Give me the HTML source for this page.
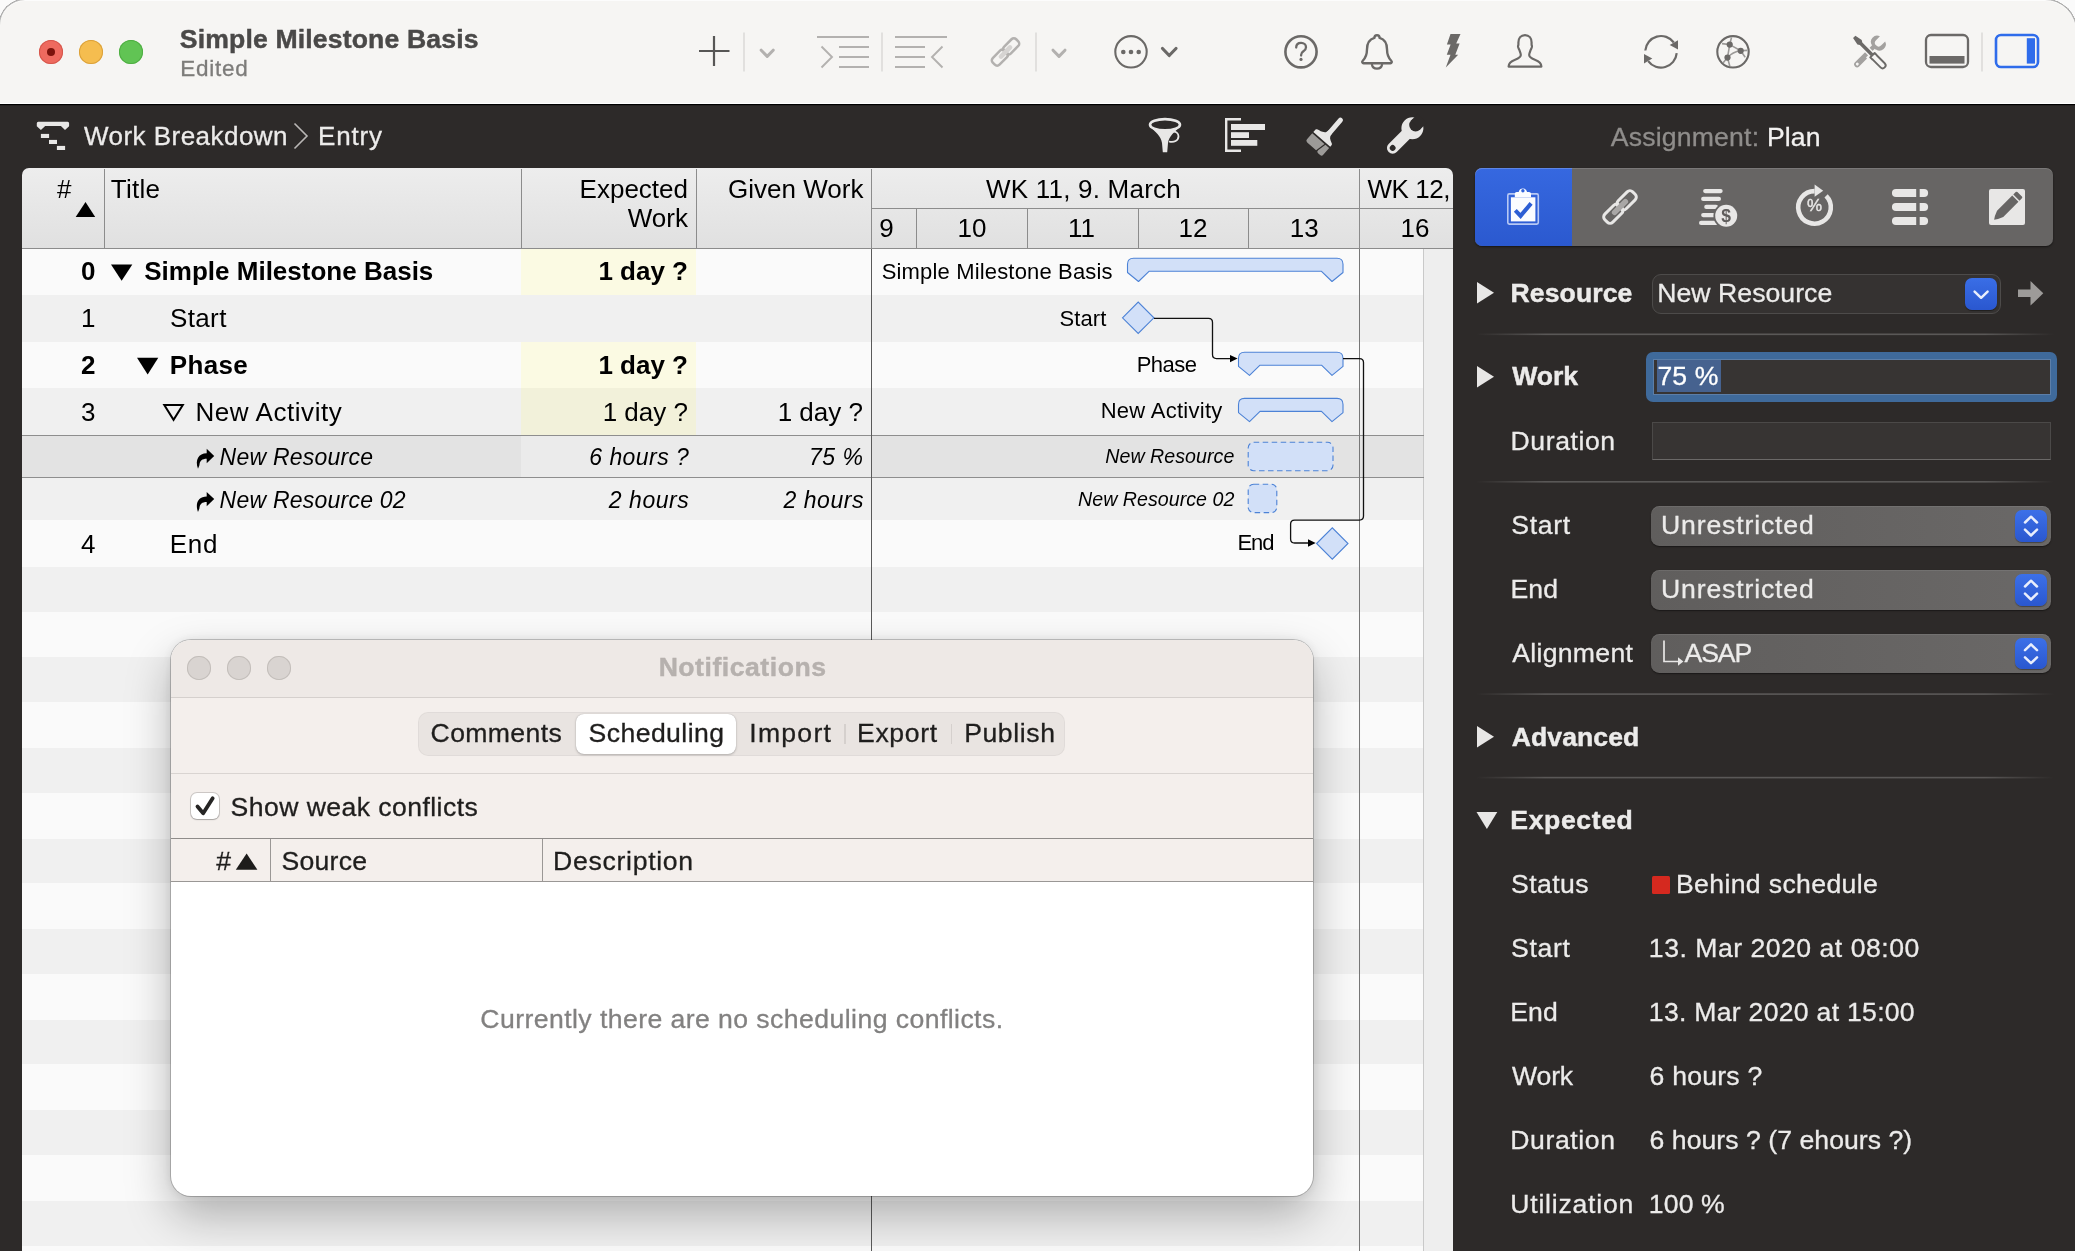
<!DOCTYPE html>
<html><head><meta charset="utf-8"><title>Simple Milestone Basis</title>
<style>
html,body{margin:0;padding:0;width:2075px;height:1251px;overflow:hidden;}
body{width:2075px;height:1251px;position:relative;overflow:hidden;background:#fafafa;font-family:"Liberation Sans", sans-serif;}
div{box-sizing:border-box;}
svg{position:absolute;left:0;top:0;overflow:visible;}
</style></head><body>
<!-- base -->
<div style="position:absolute;left:0;top:0;width:2075px;height:1251px;will-change:transform;overflow:hidden;">
<div style="position:absolute;left:-1.5px;top:-1.5px;width:2078px;height:1300px;background:#2d2a29;border-radius:26px 32px 26px 26px;"></div>
<div style="position:absolute;left:-1.5px;top:-1.5px;width:2078px;height:105.5px;background:#f6f5f3;border-radius:26px 32px 0 0;border:1.500px solid #bcbcbc;border-bottom:none;box-shadow:inset 0 1px 0 rgba(255,255,255,0.7);"></div>
<div style="position:absolute;left:0px;top:102.8px;width:2075px;height:1.2px;background:#ffffff;"></div>
<div style="position:absolute;left:0px;top:104px;width:2075px;height:1px;background:#000000;"></div>
<div style="position:absolute;left:0px;top:105px;width:2075px;height:1px;background:#242120;"></div>
<div style="position:absolute;left:22px;top:168px;width:1431px;height:81px;background:linear-gradient(#ededed,#e0e0e0);border-radius:7px 7px 0 0;"></div>
<div style="position:absolute;left:22px;top:249px;width:1402px;height:46px;background:#fafafa;"></div>
<div style="position:absolute;left:22px;top:295px;width:1402px;height:47px;background:#f0f0f0;"></div>
<div style="position:absolute;left:22px;top:342px;width:1402px;height:46px;background:#fafafa;"></div>
<div style="position:absolute;left:22px;top:388px;width:1402px;height:47px;background:#f0f0f0;"></div>
<div style="position:absolute;left:22px;top:435px;width:1402px;height:43px;background:#e3e3e3;"></div>
<div style="position:absolute;left:22px;top:478px;width:1402px;height:42px;background:#f0f0f0;"></div>
<div style="position:absolute;left:22px;top:520px;width:1402px;height:47px;background:#fafafa;"></div>
<div style="position:absolute;left:22px;top:567px;width:1402px;height:684px;background:#fafafa;"></div>
<div style="position:absolute;left:22px;top:566.8px;width:1402px;height:44.8px;background:#f0f0f0;"></div>
<div style="position:absolute;left:22px;top:657.37px;width:1402px;height:44.8px;background:#f0f0f0;"></div>
<div style="position:absolute;left:22px;top:747.94px;width:1402px;height:44.8px;background:#f0f0f0;"></div>
<div style="position:absolute;left:22px;top:838.51px;width:1402px;height:44.8px;background:#f0f0f0;"></div>
<div style="position:absolute;left:22px;top:929.08px;width:1402px;height:44.8px;background:#f0f0f0;"></div>
<div style="position:absolute;left:22px;top:1019.65px;width:1402px;height:44.8px;background:#f0f0f0;"></div>
<div style="position:absolute;left:22px;top:1110.22px;width:1402px;height:44.8px;background:#f0f0f0;"></div>
<div style="position:absolute;left:22px;top:1200.79px;width:1402px;height:44.8px;background:#f0f0f0;"></div>
<div style="position:absolute;left:1423.3px;top:249px;width:29.7px;height:1002px;background:#eeeeee;border-left:1.200px solid #c9c9c9;"></div>
<div style="position:absolute;left:22px;top:248px;width:1431px;height:1px;background:#8c8c8c;"></div>
<div style="position:absolute;left:1453px;top:168px;width:622px;height:1083px;background:#2d2a29;"></div>
<div style="position:absolute;left:39px;top:40px;width:24px;height:24px;background:#ee6a5f;border-radius:50%;box-shadow:inset 0 0 0 1px #d5574c;"></div>
<div style="position:absolute;left:47px;top:48px;width:8px;height:8px;background:#7c130c;border-radius:50%;"></div>
<div style="position:absolute;left:79px;top:40px;width:24px;height:24px;background:#f5bd4f;border-radius:50%;box-shadow:inset 0 0 0 1px #dba13a;"></div>
<div style="position:absolute;left:119px;top:40px;width:24px;height:24px;background:#61c454;border-radius:50%;box-shadow:inset 0 0 0 1px #4fae43;"></div>
<div style="position:absolute;white-space:pre;left:179.80px;top:26.00px;font-size:26.6px;line-height:26.6px;color:#4a4948;font-weight:700;letter-spacing:0.151px;-webkit-text-stroke:0.45px #4a4948;">Simple Milestone Basis</div>
<div style="position:absolute;white-space:pre;left:180.34px;top:57.55px;font-size:22.5px;line-height:22.5px;color:#7d7c7a;letter-spacing:0.703px;-webkit-text-stroke:0.3px #7d7c7a;">Edited</div>
<svg width="2075" height="110" viewBox="0 0 2075 110"><path d="M699 51H729.5M714 36V66" stroke="#575655" stroke-width="2.2" fill="none"/><path d="M744 32.5V71.5" stroke="#dddbd9" stroke-width="1.6"/><path d="M882 32.5V71.5" stroke="#dddbd9" stroke-width="1.6"/><path d="M1036 32.5V71.5" stroke="#dddbd9" stroke-width="1.6"/><path d="M1982 32.5V71.5" stroke="#dddbd9" stroke-width="1.6"/><path d="M761.2 50.2L767.2 56.4L773.2 50.2" stroke="#b3b1af" stroke-width="3" fill="none" stroke-linecap="round" stroke-linejoin="round"/><path d="M1053 50.2L1059 56.4L1065 50.2" stroke="#b3b1af" stroke-width="3" fill="none" stroke-linecap="round" stroke-linejoin="round"/><g stroke="#b3b1af" stroke-width="1.9" fill="none"><path d="M817 37H869M839 47H869M839 57H869M839 67H869"/><path d="M821.5 46.5L832 57L821.5 67.5" stroke-linejoin="miter"/></g><g stroke="#b3b1af" stroke-width="1.9" fill="none"><path d="M895 37H947M895 47H925M895 57H925M895 67H925"/><path d="M942.5 46.5L932 57L942.5 67.5"/></g><g transform="rotate(-45 1005.5 52)" fill="none" stroke="#b3b1af" stroke-width="2.5"><rect x="988.952" y="47.254" width="17.22" height="9.492" rx="3.276"/><rect x="1004.83" y="47.254" width="17.22" height="9.492" rx="3.276"/><path d="M999.116 52H1011.88" stroke="#d6d4d2" stroke-width="4.62" stroke-linecap="round"/></g><circle cx="1131" cy="51.8" r="15.7" stroke="#6b6967" stroke-width="2.1" fill="none"/><circle cx="1123.3" cy="52" r="2.3" fill="#6b6967"/><circle cx="1131" cy="52" r="2.3" fill="#6b6967"/><circle cx="1138.7" cy="52" r="2.3" fill="#6b6967"/><path d="M1162.5 48.5L1169.2 55.5L1176 48.5" stroke="#6b6967" stroke-width="3.2" fill="none" stroke-linecap="round" stroke-linejoin="round"/><circle cx="1301" cy="51.8" r="15.6" stroke="#6b6967" stroke-width="2.6" fill="none"/><path d="M1296.2 47.6c0-3 2-4.8 4.9-4.8c2.9 0 4.9 1.8 4.9 4.4c0 2-1 3-2.6 4.1c-1.600 1.1-2.300 1.900-2.300 3.700v0.600" stroke="#6b6967" stroke-width="2.3" fill="none" stroke-linecap="round"/><circle cx="1301" cy="59.4" r="1.6" fill="#6b6967"/><path d="M1377 35.3c1.500 0 2.600 1.100 2.600 2.600c4.800 1.400 7.400 5.400 7.400 11.400c0 6 1.400 8.800 4.400 11.700c0.800 0.800 0.300 2.200-0.900 2.200h-27c-1.200 0-1.700-1.400-0.900-2.200c3-2.900 4.400-5.700 4.400-11.700c0-6 2.600-10 7.400-11.400c0-1.500 1.100-2.600 2.600-2.600z" stroke="#6b6967" stroke-width="2.4" fill="none" stroke-linejoin="round"/><path d="M1371.800 64c0.400 2.700 2.500 4.700 5.200 4.700c2.700 0 4.800-2 5.200-4.700" stroke="#6b6967" stroke-width="2.200" fill="none"/><path d="M1450.500 34h10l-4.300 9.500h3.400l-4.300 11.300h2.900l-12.400 12.600l4.700-12.700h-3.700l3.800-10.200h-3.700z" fill="#6b6967"/><path d="M1525 35.200c4.200 0 6.600 3.200 6.600 7.400c0 1.300-0.200 2.300 0.300 3.200c0.500 1-0.700 2.800-1.100 3.900c-0.700 1.900-1.600 3.300-1.600 5.400c0 2.300 2.300 3.400 5.700 4.600c4.500 1.600 6.500 3.200 6.500 6.900h-32.800c0-3.700 2-5.300 6.500-6.900c3.400-1.200 5.700-2.300 5.700-4.600c0-2.100-0.900-3.500-1.600-5.400c-0.400-1.100-1.600-2.900-1.100-3.900c0.500-0.900 0.300-1.900 0.300-3.200c0-4.200 2.400-7.400 6.600-7.400z" stroke="#6b6967" stroke-width="2.200" fill="none" stroke-linejoin="round"/><g stroke="#6b6967" stroke-width="2.200" fill="none"><path d="M1645.300 50.500a15.800 15.800 0 0 1 28.500-8"/><path d="M1676.700 53.100a15.800 15.800 0 0 1-28.500 8"/></g><path d="M1678 40.200v9.300l-8.300-4.400z" fill="#6b6967"/><path d="M1644 63.400v-9.300l8.300 4.400z" fill="#6b6967"/><circle cx="1733" cy="51.800" r="15.700" stroke="#6b6967" stroke-width="2.100" fill="none"/><g stroke="#9b9997" stroke-width="1.600" fill="none"><path d="M1731.500 37.500l-1.800 7l-7.700-0.900M1729.700 44.600l11 6.200l6.500-0.400M1740.700 50.800l4.500 6.500M1740.700 50.800c-6 0.800-10 3.200-13.200 6.800M1729.700 44.600l-2.200 13l2.300 8.500M1727.500 57.600l-4.500 5.500"/></g><circle cx="1729.7" cy="44.6" r="3.1" fill="#6b6967"/><circle cx="1740.7" cy="50.8" r="3.1" fill="#6b6967"/><circle cx="1727.5" cy="57.6" r="3.1" fill="#6b6967"/><g transform="translate(1868.900 52.500) rotate(45)"><path d="M-2.900 -8.500V16.750a2.900 2.900 0 0 0 5.800 0V-8.500z" fill="#a3a19f"/><path d="M-3.700 -19.300A6.300 6.300 0 0 0 -2.900 -7.200H2.900A6.300 6.300 0 0 0 3.700 -19.300V-13.800A3.700 3.700 0 0 1 -3.700 -13.800z" fill="#a3a19f"/><circle cx="0" cy="16.400" r="1.450" fill="#f6f5f3"/></g><g transform="translate(1869.750 52.460) rotate(-45)"><path d="M-1.650 -21.950H1.650L3.050 -14.400L1.750 -12.300V3.200H-1.750V-12.300L-3.050 -14.400Z" fill="#f6f5f3" stroke="#f6f5f3" stroke-width="3" stroke-linejoin="round"/><path d="M-3.900 3.200H3.900V6.300L3 7.200V18.900a3 3 0 0 1-6 0V7.200L-3.900 6.300Z" fill="#f6f5f3" stroke="#f6f5f3" stroke-width="4.600"/><path d="M-1.650 -21.950H1.650L3.050 -14.400L1.750 -12.300V3.200H-1.750V-12.300L-3.050 -14.400Z" fill="#6b6967"/><path d="M-3.100 3.800H3.100V6.300L2.950 7.200V18.200a2.950 2.950 0 0 1-5.900 0V7.200L-3.100 6.300Z" fill="#f6f5f3" stroke="#6b6967" stroke-width="1.900" stroke-linejoin="round"/></g><rect x="1926" y="35" width="42" height="32" rx="5" stroke="#6b6967" stroke-width="2.300" fill="none"/><rect x="1929.500" y="56" width="35" height="7.600" fill="#6b6967"/><rect x="1996" y="35" width="42" height="32" rx="5" stroke="#2f6ceb" stroke-width="2.600" fill="none"/><rect x="2026.800" y="38.200" width="8.200" height="25.400" fill="#2f6ceb"/></svg>
<svg width="2075" height="170" viewBox="0 0 2075 170"><path d="M38.300 121.800H67.600Q69.100 121.800 69.100 123.300V126.300L65 130L60.900 126.100H45.200L40.900 130L36.800 126.300V123.300Q36.800 121.800 38.300 121.800Z" fill="#e8e7e6"/><rect x="40.900" y="133.900" width="8.200" height="4.100" fill="#e8e7e6"/><rect x="49" y="139.900" width="8" height="4.100" fill="#e8e7e6"/><rect x="56.900" y="145.900" width="8.200" height="4.100" fill="#e8e7e6"/><path d="M294.500 123.500L307 136L294.500 148.500" stroke="#b9b7b5" stroke-width="1.600" fill="none"/><ellipse cx="1165" cy="124.700" rx="15" ry="5.600" stroke="#e8e7e6" stroke-width="2.600" fill="none"/><path d="M1150.500 127c5 5 10.500 9 11.500 16l0.800 9.300h4.400l0.800-9.300c1-7 6.500-11 11.500-16c-8 4.500-21 4.500-29 0z" fill="#e8e7e6"/><path d="M1169 141.500c5 1.500 9.500-1 9.500-5.200c0-3.300-2.800-5-5.500-4.600" stroke="#e8e7e6" stroke-width="1.800" fill="none"/><path d="M1241 119.200H1226.200V150.800H1241" stroke="#e8e7e6" stroke-width="2.400" fill="none"/><rect x="1231" y="124" width="34" height="6" fill="#e8e7e6"/><rect x="1231" y="132.200" width="18" height="5.800" fill="#e8e7e6"/><rect x="1231" y="140" width="26.300" height="5.800" fill="#e8e7e6"/><g transform="translate(1321.300 139.350) rotate(41)"><rect x="-0.600" y="-29.500" width="5" height="22" rx="2.500" fill="#e8e7e6"/><path d="M-10.800 -0.300V-3.400C-10.800 -5.600 -7 -5.200 -4 -6.500C-1.500 -7.600 -0.600 -8.600 -0.600 -11.500H4.400C4.400 -8.600 5 -6.600 8 -5.100C10.500 -3.900 11.600 -3.600 11.600 -2.200V-0.300Z" fill="#e8e7e6"/><path d="M-10.800 1.400H5.400L3.200 11.600H-8.600Q-10.800 11.600 -10.800 9.400Z" fill="#9c9a98"/><path d="M6.700 1.400H11.600V10.400Q11.600 12.600 9.400 12.600H6.600Q4.400 12.600 4.800 10.400Z" fill="#9c9a98"/></g><g transform="translate(1412.400 128.200) rotate(45)"><path d="M-5.700 0H5.700V27.900a5.700 5.700 0 0 1-11.400 0Z" fill="#e8e7e6"/><circle cx="0" cy="0" r="11" fill="#e8e7e6"/><circle cx="0" cy="-4.500" r="6.400" fill="#2d2a29"/><rect x="-6.400" y="-14" width="12.800" height="9.500" fill="#2d2a29"/><circle cx="0" cy="27.900" r="2.900" fill="#2d2a29"/></g></svg>
<div style="position:absolute;white-space:pre;left:83.94px;top:123.40px;font-size:26px;line-height:26px;color:#eceBea;letter-spacing:0.468px;-webkit-text-stroke:0.3px #eceBea;">Work Breakdown</div>
<div style="position:absolute;white-space:pre;left:318.08px;top:123.40px;font-size:26px;line-height:26px;color:#ecebea;letter-spacing:0.819px;-webkit-text-stroke:0.3px #ecebea;">Entry</div>
<div style="position:absolute;white-space:pre;left:1610.73px;top:124.10px;font-size:26.6px;line-height:26.6px;color:#8f8d8b;letter-spacing:0.199px;-webkit-text-stroke:0.3px #8f8d8b;">Assignment:</div>
<div style="position:absolute;white-space:pre;left:1767.03px;top:124.10px;font-size:26.6px;line-height:26.6px;color:#f2f1f0;letter-spacing:0.101px;-webkit-text-stroke:0.3px #f2f1f0;">Plan</div>
<div style="position:absolute;left:103.5px;top:169px;width:1px;height:79px;background:#8c8c8c;"></div>
<div style="position:absolute;left:521px;top:169px;width:1px;height:79px;background:#8c8c8c;"></div>
<div style="position:absolute;left:696px;top:169px;width:1px;height:79px;background:#8c8c8c;"></div>
<div style="position:absolute;left:871px;top:169px;width:1px;height:79px;background:#8c8c8c;"></div>
<div style="position:absolute;left:871px;top:208px;width:582px;height:1px;background:#8c8c8c;"></div>
<div style="position:absolute;left:916px;top:209px;width:1px;height:39px;background:#8c8c8c;"></div>
<div style="position:absolute;left:1027px;top:209px;width:1px;height:39px;background:#8c8c8c;"></div>
<div style="position:absolute;left:1138px;top:209px;width:1px;height:39px;background:#8c8c8c;"></div>
<div style="position:absolute;left:1248px;top:209px;width:1px;height:39px;background:#8c8c8c;"></div>
<div style="position:absolute;left:1359px;top:169px;width:1px;height:79px;background:#8c8c8c;"></div>
<div style="position:absolute;white-space:pre;left:57.00px;top:175.60px;font-size:26px;line-height:26px;color:#000;">#</div>
<div style="position:absolute;white-space:pre;left:110.74px;top:175.60px;font-size:26px;line-height:26px;color:#000;letter-spacing:0.286px;">Title</div>
<div style="position:absolute;white-space:pre;left:579.59px;top:175.60px;font-size:26px;line-height:26px;color:#000;">Expected</div>
<div style="position:absolute;white-space:pre;left:627.80px;top:205.20px;font-size:26px;line-height:26px;color:#000;">Work</div>
<div style="position:absolute;white-space:pre;left:728.06px;top:175.60px;font-size:26px;line-height:26px;color:#000;">Given Work</div>
<div style="position:absolute;white-space:pre;left:986.04px;top:175.60px;font-size:26px;line-height:26px;color:#000;letter-spacing:0.214px;">WK 11, 9. March</div>
<div style="position:absolute;white-space:pre;left:1367.54px;top:175.60px;font-size:26px;line-height:26px;color:#000;letter-spacing:-0.480px;">WK 12,</div>
<div style="position:absolute;white-space:pre;left:879.20px;top:215.20px;font-size:26px;line-height:26px;color:#000;">9</div>
<div style="position:absolute;white-space:pre;left:957.54px;top:215.20px;font-size:26px;line-height:26px;color:#000;">10</div>
<div style="position:absolute;white-space:pre;left:1068.00px;top:215.20px;font-size:26px;line-height:26px;color:#000;">11</div>
<div style="position:absolute;white-space:pre;left:1178.54px;top:215.20px;font-size:26px;line-height:26px;color:#000;">12</div>
<div style="position:absolute;white-space:pre;left:1289.74px;top:215.20px;font-size:26px;line-height:26px;color:#000;">13</div>
<div style="position:absolute;white-space:pre;left:1400.54px;top:215.20px;font-size:26px;line-height:26px;color:#000;">16</div>
<div style="position:absolute;left:521px;top:249px;width:175px;height:46px;background:#fbfae3;"></div>
<div style="position:absolute;left:521px;top:342px;width:175px;height:46px;background:#fbfae3;"></div>
<div style="position:absolute;left:521px;top:388px;width:175px;height:47px;background:#f2f1da;"></div>
<div style="position:absolute;left:521px;top:435px;width:350.5px;height:43px;background:#ebebeb;"></div>
<div style="position:absolute;left:22px;top:434.5px;width:1402px;height:1px;background:#8e8e8e;"></div>
<div style="position:absolute;left:22px;top:477px;width:1402px;height:1px;background:#8e8e8e;"></div>
<div style="position:absolute;white-space:pre;left:80.93px;top:258.30px;font-size:26px;line-height:26px;color:#000;font-weight:700;">0</div>
<div style="position:absolute;white-space:pre;left:80.93px;top:305.10px;font-size:26px;line-height:26px;color:#000;">1</div>
<div style="position:absolute;white-space:pre;left:80.93px;top:352.00px;font-size:26px;line-height:26px;color:#000;font-weight:700;">2</div>
<div style="position:absolute;white-space:pre;left:80.93px;top:398.80px;font-size:26px;line-height:26px;color:#000;">3</div>
<div style="position:absolute;white-space:pre;left:80.93px;top:530.80px;font-size:26px;line-height:26px;color:#000;">4</div>
<div style="position:absolute;white-space:pre;left:144.23px;top:258.30px;font-size:26px;line-height:26px;color:#000;font-weight:700;letter-spacing:0.006px;">Simple Milestone Basis</div>
<div style="position:absolute;white-space:pre;left:169.93px;top:305.10px;font-size:26px;line-height:26px;color:#000;letter-spacing:0.385px;">Start</div>
<div style="position:absolute;white-space:pre;left:169.68px;top:352.00px;font-size:26px;line-height:26px;color:#000;font-weight:700;letter-spacing:0.389px;">Phase</div>
<div style="position:absolute;white-space:pre;left:195.48px;top:398.80px;font-size:26px;line-height:26px;color:#000;letter-spacing:0.564px;">New Activity</div>
<div style="position:absolute;white-space:pre;left:219.60px;top:445.60px;font-size:23px;line-height:23px;color:#000;font-style:italic;letter-spacing:0.234px;">New Resource</div>
<div style="position:absolute;white-space:pre;left:219.60px;top:488.70px;font-size:23px;line-height:23px;color:#000;font-style:italic;letter-spacing:0.229px;">New Resource 02</div>
<div style="position:absolute;white-space:pre;left:169.68px;top:530.80px;font-size:26px;line-height:26px;color:#000;letter-spacing:0.741px;">End</div>
<div style="position:absolute;white-space:pre;left:598.41px;top:258.30px;font-size:26px;line-height:26px;color:#000;font-weight:700;">1 day ?</div>
<div style="position:absolute;white-space:pre;left:598.41px;top:352.00px;font-size:26px;line-height:26px;color:#000;font-weight:700;">1 day ?</div>
<div style="position:absolute;white-space:pre;left:602.70px;top:398.80px;font-size:26px;line-height:26px;color:#000;">1 day ?</div>
<div style="position:absolute;white-space:pre;left:777.70px;top:398.80px;font-size:26px;line-height:26px;color:#000;">1 day ?</div>
<div style="position:absolute;white-space:pre;left:589.30px;top:445.60px;font-size:23px;line-height:23px;color:#000;font-style:italic;letter-spacing:0.449px;">6 hours ?</div>
<div style="position:absolute;white-space:pre;left:809.00px;top:445.60px;font-size:23px;line-height:23px;color:#000;font-style:italic;letter-spacing:0.521px;">75 %</div>
<div style="position:absolute;white-space:pre;left:608.80px;top:488.70px;font-size:23px;line-height:23px;color:#000;font-style:italic;letter-spacing:0.547px;">2 hours</div>
<div style="position:absolute;white-space:pre;left:783.50px;top:488.70px;font-size:23px;line-height:23px;color:#000;font-style:italic;letter-spacing:0.547px;">2 hours</div>
<div style="position:absolute;left:871px;top:249px;width:1px;height:1002px;background:#5a5a5a;"></div>
<div style="position:absolute;left:1359px;top:249px;width:1px;height:1002px;background:#777777;"></div>
<svg width="2075" height="1251" viewBox="0 0 2075 1251"><path d="M75.700 217L85.500 202L95.200 217z" fill="#000"/><path d="M111 264.500h21.300l-10.650 16.300z" fill="#000"/><path d="M137 357.700h21.300l-10.650 16.800z" fill="#000"/><path d="M164.300 405h18.500l-9.250 14.800z" fill="none" stroke="#000" stroke-width="2"/><path transform="translate(196.2 448.8)" d="M10.500 0L18 7.200L10.500 14.400V10C6 10 3.500 12 3.200 16.500L1.800 20C-1.500 11 2.500 4.500 10.500 4.500z" fill="#000"/><path transform="translate(196.2 491.9)" d="M10.500 0L18 7.200L10.500 14.400V10C6 10 3.500 12 3.200 16.500L1.800 20C-1.500 11 2.500 4.500 10.500 4.500z" fill="#000"/><path d="M1133.5 258.3 H1337 Q1343 258.3 1343 264.3 V272.5 L1332 281.5 L1321.5 271.3 H1149 L1138.5 281.5 L1127.5 272.5 V264.3 Q1127.5 258.3 1133.5 258.3 Z" fill="#d2e0f8" stroke="#4c82d6" stroke-width="1.100" stroke-linejoin="round"/><path d="M1244.5 352.2 H1337 Q1343 352.2 1343 358.2 V366.4 L1332 375.4 L1321.5 365.2 H1260 L1249.5 375.4 L1238.5 366.4 V358.2 Q1238.5 352.2 1244.5 352.2 Z" fill="#d2e0f8" stroke="#4c82d6" stroke-width="1.100" stroke-linejoin="round"/><path d="M1244.5 398.4 H1337 Q1343 398.4 1343 404.4 V412.6 L1332 421.6 L1321.5 411.4 H1260 L1249.5 421.6 L1238.5 412.6 V404.4 Q1238.5 398.4 1244.5 398.4 Z" fill="#d2e0f8" stroke="#4c82d6" stroke-width="1.100" stroke-linejoin="round"/><path d="M1122.5 317.8L1138.2 302.1L1153.9 317.8L1138.2 333.5Z" fill="#d2e0f8" stroke="#4c82d6" stroke-width="1.100"/><path d="M1316.6 543.5L1332.3 527.8L1348 543.5L1332.3 559.2Z" fill="#d2e0f8" stroke="#4c82d6" stroke-width="1.100"/><rect x="1248.200" y="442.300" width="84.800" height="28.400" rx="5.500" fill="#d2e0f8" stroke="#4c82d6" stroke-width="1.100" stroke-dasharray="5.500 3.500"/><rect x="1248.200" y="484.200" width="28.600" height="28.400" rx="5.500" fill="#d2e0f8" stroke="#4c82d6" stroke-width="1.100" stroke-dasharray="5.500 3.500"/><path d="M1154 318.400H1208.500Q1212.500 318.400 1212.500 322.400V354.600Q1212.500 358.600 1216.500 358.600H1231" stroke="#111" stroke-width="1.300" fill="none"/><path d="M1230 354.900L1237.600 358.600L1230 362.300z" fill="#000"/><path d="M1343 358.600H1359.500Q1363.500 358.600 1363.500 362.600V516.100Q1363.500 520.100 1359.500 520.100H1294.600Q1290.600 520.100 1290.600 524.100V539Q1290.600 543 1294.600 543H1309" stroke="#111" stroke-width="1.300" fill="none"/><path d="M1308 539.300L1315.700 543L1308 546.700z" fill="#000"/></svg>
<div style="position:absolute;white-space:pre;left:881.71px;top:260.50px;font-size:22px;line-height:22px;color:#000;letter-spacing:0.163px;">Simple Milestone Basis</div>
<div style="position:absolute;white-space:pre;left:1059.60px;top:307.50px;font-size:22px;line-height:22px;color:#000;letter-spacing:0.083px;">Start</div>
<div style="position:absolute;white-space:pre;left:1136.70px;top:354.10px;font-size:22px;line-height:22px;color:#000;letter-spacing:-0.523px;">Phase</div>
<div style="position:absolute;white-space:pre;left:1100.70px;top:400.00px;font-size:22px;line-height:22px;color:#000;letter-spacing:0.282px;">New Activity</div>
<div style="position:absolute;white-space:pre;left:1105.30px;top:446.70px;font-size:19.6px;line-height:19.6px;color:#000;font-style:italic;letter-spacing:0.045px;">New Resource</div>
<div style="position:absolute;white-space:pre;left:1078.00px;top:489.80px;font-size:19.6px;line-height:19.6px;color:#000;font-style:italic;letter-spacing:0.039px;">New Resource 02</div>
<div style="position:absolute;white-space:pre;left:1237.40px;top:532.40px;font-size:22px;line-height:22px;color:#000;letter-spacing:-0.978px;">End</div>
<div style="position:absolute;left:1475px;top:168px;width:578px;height:78px;background:#676564;border-radius:7px;box-shadow:0 1px 2px rgba(0,0,0,0.5),inset 0 1px 0 rgba(255,255,255,0.13);"></div>
<div style="position:absolute;left:1475px;top:168px;width:97px;height:78px;background:linear-gradient(#3668e0,#2b59cf);border-radius:7px 0 0 7px;box-shadow:inset 0 1px 0 rgba(255,255,255,0.2);"></div>
<div style="position:absolute;left:1652px;top:273.8px;width:349px;height:40px;background:#353231;border-radius:9px;border:1.500px solid #4d4b4a;"></div>
<div style="position:absolute;left:1964.8px;top:278.3px;width:32.2px;height:31.8px;background:linear-gradient(#3a6ee6,#2a57cf);border-radius:7px;box-shadow:0 1px 1px rgba(0,0,0,0.4);"></div>
<div style="position:absolute;left:1646px;top:352.3px;width:411px;height:49.5px;background:#3f6a9b;border-radius:7px;"></div>
<div style="position:absolute;left:1653px;top:359px;width:397.5px;height:36.3px;background:#373433;border:1px solid #5c7ea8;"></div>
<div style="position:absolute;left:1657px;top:360.4px;width:64px;height:31.3px;background:#46628f;"></div>
<div style="position:absolute;left:1652px;top:422.2px;width:398.8px;height:37.8px;background:#373433;border:1px solid #4b4948;border-bottom-color:#6b6968;"></div>
<div style="position:absolute;left:1650.5px;top:506.2px;width:400.3px;height:39.6px;background:linear-gradient(90deg,#605e5d,#6a6867);border-radius:8.500px;box-shadow:0 1px 1.500px rgba(0,0,0,0.45),inset 0 1px 0 rgba(255,255,255,0.08);"></div>
<div style="position:absolute;left:2015.2px;top:510.4px;width:31.6px;height:31.4px;background:linear-gradient(#3c70e8,#2a57cf);border-radius:7px;box-shadow:0 1px 1px rgba(0,0,0,0.35);"></div>
<div style="position:absolute;left:1650.5px;top:570.2px;width:400.3px;height:39.6px;background:linear-gradient(90deg,#605e5d,#6a6867);border-radius:8.500px;box-shadow:0 1px 1.500px rgba(0,0,0,0.45),inset 0 1px 0 rgba(255,255,255,0.08);"></div>
<div style="position:absolute;left:2015.2px;top:574.4px;width:31.6px;height:31.4px;background:linear-gradient(#3c70e8,#2a57cf);border-radius:7px;box-shadow:0 1px 1px rgba(0,0,0,0.35);"></div>
<div style="position:absolute;left:1650.5px;top:633.9px;width:400.3px;height:39.6px;background:linear-gradient(90deg,#605e5d,#6a6867);border-radius:8.500px;box-shadow:0 1px 1.500px rgba(0,0,0,0.45),inset 0 1px 0 rgba(255,255,255,0.08);"></div>
<div style="position:absolute;left:2015.2px;top:638.1px;width:31.6px;height:31.4px;background:linear-gradient(#3c70e8,#2a57cf);border-radius:7px;box-shadow:0 1px 1px rgba(0,0,0,0.35);"></div>
<div style="position:absolute;left:1652px;top:876px;width:17.7px;height:17.7px;background:#d5291f;border-radius:1.500px;"></div>
<svg width="2075" height="1251" viewBox="0 0 2075 1251"><rect x="1507.800" y="193.900" width="30.500" height="30.200" rx="1.500" fill="none" stroke="#b7c8f4" stroke-width="1.600"/><rect x="1510.900" y="197.300" width="24.500" height="24.100" fill="#fbfcff"/><path d="M1514.800 197.300v-3.300c0-1.300 0.800-2 2-2h1.900a4.300 4.300 0 0 1 8.400 0h1.900c1.200 0 2 0.700 2 2v3.300z" fill="#fbfcff"/><circle cx="1522.900" cy="190.800" r="1.700" fill="#3063da"/><path d="M1515.300 210.300l5.300 5.600l10.500-12.500" stroke="#2d5ed4" stroke-width="4" fill="none"/><g transform="rotate(-45 1620 207)" fill="none" stroke="#e8e7e6" stroke-width="3"><rect x="1600.3" y="201.35" width="20.5" height="11.3" rx="3.9"/><rect x="1619.2" y="201.35" width="20.5" height="11.3" rx="3.9"/><path d="M1612.4 207H1627.6" stroke="#a9a7a6" stroke-width="5.5" stroke-linecap="round"/></g><g stroke="#e8e7e6" stroke-width="4.200" stroke-linecap="round"><path d="M1705.200 191.100H1720.600M1703.200 198.900H1718.900M1706.300 206.900H1716M1703.200 215.100H1714M1701.100 222.900H1716"/></g><circle cx="1726.200" cy="215.800" r="12.800" fill="#676564"/><circle cx="1726.200" cy="215.800" r="11" fill="#e8e7e6"/><text x="1726.200" y="222" text-anchor="middle" font-family="Liberation Sans" font-weight="700" font-size="17.500" fill="#5f5d5c">$</text><path d="M1814.600 191.100A16.300 16.300 0 1 0 1826.100 195.900" stroke="#e8e7e6" stroke-width="4.600" fill="none"/><path d="M1814.600 184.600L1823.200 190.700L1814.600 196.800z" fill="#e8e7e6"/><text x="1814.600" y="211.400" text-anchor="middle" font-family="Liberation Sans" font-weight="400" font-size="17" fill="#e8e7e6" stroke="#e8e7e6" stroke-width="0.400">%</text><path d="M1896 189h20.200v8.100h-20.200a4.050 4.050 0 0 1 0-8.100z" fill="#e8e7e6"/><path d="M1919.700 189h4.350a4.050 4.050 0 0 1 0 8.100h-4.350z" fill="#e8e7e6"/><path d="M1896 202.95h20.200v8.100h-20.200a4.050 4.050 0 0 1 0-8.100z" fill="#e8e7e6"/><path d="M1919.700 202.95h4.350a4.050 4.050 0 0 1 0 8.100h-4.350z" fill="#e8e7e6"/><path d="M1896 216.9h20.200v8.100h-20.200a4.050 4.050 0 0 1 0-8.100z" fill="#e8e7e6"/><path d="M1919.700 216.9h4.350a4.050 4.050 0 0 1 0 8.100h-4.350z" fill="#e8e7e6"/><rect x="1989" y="189" width="36" height="36" rx="2" fill="#e8e7e6"/><g transform="rotate(45 2007 207)"><path d="M2002.600 190.300a1.200 1.200 0 0 1 1.200-1.200h6.400a1.200 1.200 0 0 1 1.200 1.200v3.400h-8.800zM2002.600 195.200h8.800v21.500l-2.200 5.200l-2.200 3.300l-2.200-3.300l-2.200-5.200z" fill="#676564"/></g><path d="M1477 282v21.400l17-10.700z" fill="#e8e7e6"/><path d="M1477 366.1v21.400l17-10.700z" fill="#e8e7e6"/><path d="M1477 726v21.400l17-10.700z" fill="#e8e7e6"/><path d="M1476.500 812h20.800l-10.400 17z" fill="#e8e7e6"/><defs><linearGradient id="sepg" x1="0" x2="1" y1="0" y2="0"><stop offset="0" stop-color="#5a5857" stop-opacity="0"/><stop offset="0.120" stop-color="#5a5857"/><stop offset="0.880" stop-color="#5a5857"/><stop offset="1" stop-color="#5a5857" stop-opacity="0"/></linearGradient></defs><rect x="1476" y="333.5" width="578" height="1.600" fill="url(#sepg)"/><rect x="1476" y="481" width="578" height="1.600" fill="url(#sepg)"/><rect x="1476" y="693.3" width="578" height="1.600" fill="url(#sepg)"/><rect x="1476" y="776.8" width="578" height="1.600" fill="url(#sepg)"/><path d="M1974.600 291.600l6.500 6.200l6.500-6.200" stroke="#e8eefc" stroke-width="2.500" fill="none" stroke-linecap="round" stroke-linejoin="round"/><path d="M2018 289.500h12.500v-8.500l12.800 12.300l-12.800 12.300v-8.500h-12.500z" fill="#9d9b99"/><path d="M2025 522.5l6-5.800l6 5.800M2025 529.7l6 5.800l6-5.800" stroke="#e9eefc" stroke-width="2.500" fill="none" stroke-linecap="round" stroke-linejoin="round"/><path d="M2025 586.5l6-5.800l6 5.800M2025 593.7l6 5.800l6-5.800" stroke="#e9eefc" stroke-width="2.500" fill="none" stroke-linecap="round" stroke-linejoin="round"/><path d="M2025 650.2l6-5.800l6 5.800M2025 657.4l6 5.800l6-5.800" stroke="#e9eefc" stroke-width="2.500" fill="none" stroke-linecap="round" stroke-linejoin="round"/><path d="M1664 640.500v21h16.500" stroke="#e8e7e6" stroke-width="1.700" fill="none"/><path d="M1678 657.300l5.400 4.200l-5.400 4.200z" fill="#e8e7e6"/></svg>
<div style="position:absolute;white-space:pre;left:1510.53px;top:280.20px;font-size:26.6px;line-height:26.6px;color:#ecebea;font-weight:700;letter-spacing:0.088px;-webkit-text-stroke:0.45px #ecebea;">Resource</div>
<div style="position:absolute;white-space:pre;left:1657.23px;top:280.20px;font-size:26.6px;line-height:26.6px;color:#ecebea;letter-spacing:0.057px;-webkit-text-stroke:0.3px #ecebea;">New Resource</div>
<div style="position:absolute;white-space:pre;left:1512.23px;top:363.40px;font-size:26.6px;line-height:26.6px;color:#ecebea;font-weight:700;letter-spacing:-0.050px;-webkit-text-stroke:0.45px #ecebea;">Work</div>
<div style="position:absolute;white-space:pre;left:1657.40px;top:363.40px;font-size:26.6px;line-height:26.6px;color:#ffffff;letter-spacing:0.090px;-webkit-text-stroke:0.3px #ffffff;">75 %</div>
<div style="position:absolute;white-space:pre;left:1510.53px;top:428.10px;font-size:26.6px;line-height:26.6px;color:#ecebea;letter-spacing:0.587px;-webkit-text-stroke:0.3px #ecebea;">Duration</div>
<div style="position:absolute;white-space:pre;left:1511.30px;top:512.00px;font-size:26.6px;line-height:26.6px;color:#ecebea;letter-spacing:0.656px;-webkit-text-stroke:0.3px #ecebea;">Start</div>
<div style="position:absolute;white-space:pre;left:1661.03px;top:512.00px;font-size:26.6px;line-height:26.6px;color:#ecebea;letter-spacing:0.852px;-webkit-text-stroke:0.3px #ecebea;">Unrestricted</div>
<div style="position:absolute;white-space:pre;left:1510.53px;top:576.00px;font-size:26.6px;line-height:26.6px;color:#ecebea;letter-spacing:0.054px;-webkit-text-stroke:0.3px #ecebea;">End</div>
<div style="position:absolute;white-space:pre;left:1661.03px;top:576.00px;font-size:26.6px;line-height:26.6px;color:#ecebea;letter-spacing:0.852px;-webkit-text-stroke:0.3px #ecebea;">Unrestricted</div>
<div style="position:absolute;white-space:pre;left:1512.23px;top:640.00px;font-size:26.6px;line-height:26.6px;color:#ecebea;letter-spacing:0.300px;-webkit-text-stroke:0.3px #ecebea;">Alignment</div>
<div style="position:absolute;white-space:pre;left:1684.53px;top:640.00px;font-size:26.6px;line-height:26.6px;color:#ecebea;letter-spacing:-1.074px;-webkit-text-stroke:0.3px #ecebea;">ASAP</div>
<div style="position:absolute;white-space:pre;left:1511.73px;top:723.70px;font-size:26.6px;line-height:26.6px;color:#ecebea;font-weight:700;letter-spacing:0.075px;-webkit-text-stroke:0.45px #ecebea;">Advanced</div>
<div style="position:absolute;white-space:pre;left:1510.33px;top:807.40px;font-size:26.6px;line-height:26.6px;color:#ecebea;font-weight:700;letter-spacing:0.612px;-webkit-text-stroke:0.45px #ecebea;">Expected</div>
<div style="position:absolute;white-space:pre;left:1511.10px;top:871.40px;font-size:26.6px;line-height:26.6px;color:#ecebea;letter-spacing:0.431px;-webkit-text-stroke:0.3px #ecebea;">Status</div>
<div style="position:absolute;white-space:pre;left:1511.10px;top:935.40px;font-size:26.6px;line-height:26.6px;color:#ecebea;letter-spacing:0.656px;-webkit-text-stroke:0.3px #ecebea;">Start</div>
<div style="position:absolute;white-space:pre;left:1510.33px;top:999.40px;font-size:26.6px;line-height:26.6px;color:#ecebea;letter-spacing:0.054px;-webkit-text-stroke:0.3px #ecebea;">End</div>
<div style="position:absolute;white-space:pre;left:1512.03px;top:1063.40px;font-size:26.6px;line-height:26.6px;color:#ecebea;letter-spacing:-0.138px;-webkit-text-stroke:0.3px #ecebea;">Work</div>
<div style="position:absolute;white-space:pre;left:1510.33px;top:1127.40px;font-size:26.6px;line-height:26.6px;color:#ecebea;letter-spacing:0.587px;-webkit-text-stroke:0.3px #ecebea;">Duration</div>
<div style="position:absolute;white-space:pre;left:1510.33px;top:1191.40px;font-size:26.6px;line-height:26.6px;color:#ecebea;letter-spacing:0.764px;-webkit-text-stroke:0.3px #ecebea;">Utilization</div>
<div style="position:absolute;white-space:pre;left:1676.03px;top:871.40px;font-size:26.6px;line-height:26.6px;color:#ecebea;letter-spacing:0.363px;-webkit-text-stroke:0.3px #ecebea;">Behind schedule</div>
<div style="position:absolute;white-space:pre;left:1648.83px;top:935.40px;font-size:26.6px;line-height:26.6px;color:#ecebea;letter-spacing:0.511px;-webkit-text-stroke:0.3px #ecebea;">13. Mar 2020 at 08:00</div>
<div style="position:absolute;white-space:pre;left:1648.83px;top:999.40px;font-size:26.6px;line-height:26.6px;color:#ecebea;letter-spacing:0.281px;-webkit-text-stroke:0.3px #ecebea;">13. Mar 2020 at 15:00</div>
<div style="position:absolute;white-space:pre;left:1649.60px;top:1063.40px;font-size:26.6px;line-height:26.6px;color:#ecebea;letter-spacing:0.226px;-webkit-text-stroke:0.3px #ecebea;">6 hours ?</div>
<div style="position:absolute;white-space:pre;left:1649.60px;top:1127.40px;font-size:26.6px;line-height:26.6px;color:#ecebea;letter-spacing:0.045px;-webkit-text-stroke:0.3px #ecebea;">6 hours ? (7 ehours ?)</div>
<div style="position:absolute;white-space:pre;left:1648.83px;top:1191.40px;font-size:26.6px;line-height:26.6px;color:#ecebea;letter-spacing:0.115px;-webkit-text-stroke:0.3px #ecebea;">100 %</div>
</div>
<!-- dlg -->
<div style="position:absolute;left:0;top:0;width:2075px;height:1251px;will-change:transform;overflow:hidden;">
<div style="position:absolute;left:171px;top:640px;width:1142px;height:556px;background:#ffffff;border-radius:20px;box-shadow:0 0 0 1px rgba(0,0,0,0.21),0 20px 46px rgba(0,0,0,0.27),0 0 12px rgba(0,0,0,0.09);overflow:hidden;"></div>
<div style="position:absolute;left:171px;top:640px;width:1142px;height:57px;background:#eee9e6;border-radius:20px 20px 0 0;"></div>
<div style="position:absolute;left:171px;top:696.5px;width:1142px;height:1px;background:#d5d0cd;"></div>
<div style="position:absolute;left:171px;top:697.5px;width:1142px;height:184px;background:#f4efec;"></div>
<div style="position:absolute;left:171px;top:772.7px;width:1142px;height:1px;background:#d9d4d1;"></div>
<div style="position:absolute;left:171px;top:838px;width:1142px;height:1px;background:#8f8c8a;"></div>
<div style="position:absolute;left:171px;top:880.6px;width:1142px;height:1px;background:#9a9795;"></div>
<div style="position:absolute;left:270.3px;top:839px;width:1px;height:41.6px;background:#9a9795;"></div>
<div style="position:absolute;left:542.2px;top:839px;width:1px;height:41.6px;background:#9a9795;"></div>
<div style="position:absolute;left:187.2px;top:656.2px;width:23.6px;height:23.6px;background:#d9d4d1;border-radius:50%;box-shadow:inset 0 0 0 1px #c3beba;"></div>
<div style="position:absolute;left:227.2px;top:656.2px;width:23.6px;height:23.6px;background:#d9d4d1;border-radius:50%;box-shadow:inset 0 0 0 1px #c3beba;"></div>
<div style="position:absolute;left:267.2px;top:656.2px;width:23.6px;height:23.6px;background:#d9d4d1;border-radius:50%;box-shadow:inset 0 0 0 1px #c3beba;"></div>
<div style="position:absolute;white-space:pre;left:658.63px;top:653.50px;font-size:26.6px;line-height:26.6px;color:#b6b1ae;font-weight:700;letter-spacing:0.524px;-webkit-text-stroke:0.45px #b6b1ae;">Notifications</div>
<div style="position:absolute;left:418.3px;top:712.2px;width:647.2px;height:44px;background:#e9e4e1;border-radius:10px;box-shadow:inset 0 0 0 1px rgba(0,0,0,0.035);"></div>
<div style="position:absolute;left:576px;top:714.4px;width:160.2px;height:39.8px;background:#ffffff;border-radius:8px;box-shadow:0 1px 2.500px rgba(0,0,0,0.22),0 0 1px rgba(0,0,0,0.25);"></div>
<div style="position:absolute;left:844.4px;top:724px;width:1.3px;height:20px;background:#d5d0cd;"></div>
<div style="position:absolute;left:950.5px;top:724px;width:1.3px;height:20px;background:#d5d0cd;"></div>
<div style="position:absolute;white-space:pre;left:430.60px;top:719.90px;font-size:26.6px;line-height:26.6px;color:#1f1e1d;letter-spacing:0.369px;-webkit-text-stroke:0.3px #1f1e1d;">Comments</div>
<div style="position:absolute;white-space:pre;left:588.50px;top:719.90px;font-size:26.6px;line-height:26.6px;color:#1f1e1d;letter-spacing:0.441px;-webkit-text-stroke:0.3px #1f1e1d;">Scheduling</div>
<div style="position:absolute;white-space:pre;left:749.33px;top:719.90px;font-size:26.6px;line-height:26.6px;color:#1f1e1d;letter-spacing:1.238px;-webkit-text-stroke:0.3px #1f1e1d;">Import</div>
<div style="position:absolute;white-space:pre;left:857.03px;top:719.90px;font-size:26.6px;line-height:26.6px;color:#1f1e1d;letter-spacing:0.638px;-webkit-text-stroke:0.3px #1f1e1d;">Export</div>
<div style="position:absolute;white-space:pre;left:964.13px;top:719.90px;font-size:26.6px;line-height:26.6px;color:#1f1e1d;letter-spacing:0.600px;-webkit-text-stroke:0.3px #1f1e1d;">Publish</div>
<div style="position:absolute;left:191.3px;top:793.2px;width:27.3px;height:26.2px;background:#ffffff;border-radius:6px;box-shadow:0 0 0 1px rgba(0,0,0,0.16),0 1px 1.500px rgba(0,0,0,0.18);"></div>
<div style="position:absolute;white-space:pre;left:230.60px;top:793.80px;font-size:26.6px;line-height:26.6px;color:#1f1e1d;letter-spacing:0.428px;-webkit-text-stroke:0.3px #1f1e1d;">Show weak conflicts</div>
<div style="position:absolute;white-space:pre;left:216.20px;top:848.10px;font-size:26.6px;line-height:26.6px;color:#1f1e1d;-webkit-text-stroke:0.3px #1f1e1d;">#</div>
<div style="position:absolute;white-space:pre;left:281.50px;top:848.10px;font-size:26.6px;line-height:26.6px;color:#1f1e1d;letter-spacing:0.259px;-webkit-text-stroke:0.3px #1f1e1d;">Source</div>
<div style="position:absolute;white-space:pre;left:553.03px;top:848.10px;font-size:26.6px;line-height:26.6px;color:#1f1e1d;letter-spacing:0.711px;-webkit-text-stroke:0.3px #1f1e1d;">Description</div>
<div style="position:absolute;white-space:pre;left:480.30px;top:1006.10px;font-size:26.6px;line-height:26.6px;color:#828180;letter-spacing:0.435px;-webkit-text-stroke:0.3px #828180;">Currently there are no scheduling conflicts.</div>
<svg width="2075" height="1251" viewBox="0 0 2075 1251"><path d="M197.500 806.500l5.700 6.800l9.500-15" stroke="#262524" stroke-width="3.800" fill="none" stroke-linecap="round" stroke-linejoin="round"/><path d="M235.800 869.800l10.800-16.200l10.800 16.200z" fill="#1d1c1b"/></svg>
</div>
<!-- top -->
<div style="position:absolute;left:0;top:0;width:2075px;height:1251px;will-change:transform;overflow:hidden;">

</div>
</body></html>
